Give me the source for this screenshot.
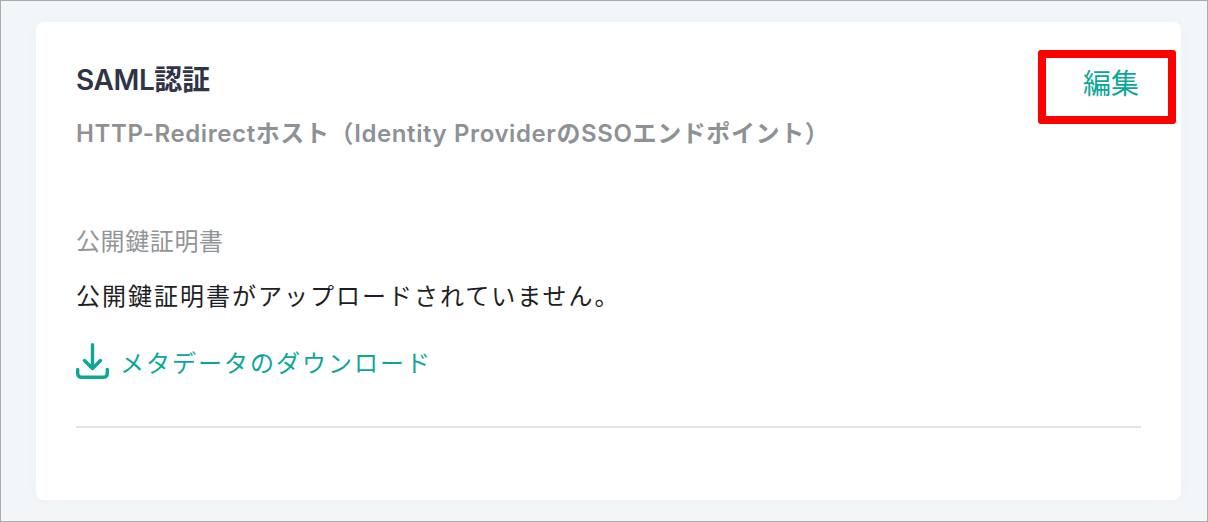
<div class="page">
  <section class="card">
    <header class="head">
      <div class="heads">
        <h2>SAML認証</h2>
        <p class="sub">HTTP-Redirectホスト（Identity ProviderのSSOエンドポイント）</p>
      </div>
      <a class="edit" href="#edit">編集</a>
    </header>
    <h3>公開鍵証明書</h3>
    <p class="msg">公開鍵証明書がアップロードされていません。</p>
    <a class="dl" href="#dl">
      <svg width="33" height="36" viewBox="0 0 33 36" fill="none" stroke="currentColor" stroke-width="3.4" stroke-linecap="round" stroke-linejoin="round" aria-hidden="true">
        <path d="M16.5 1.7V25M8.5 17.5L16.5 25.5L24.5 17.5" />
        <path d="M1.7 26.5V30Q1.7 34.3 6 34.3H27Q31.3 34.3 31.3 30V26.5" />
      </svg>
      <span>メタデータのダウンロード</span>
    </a>
    <hr />
  </section>
</div>

<style>
  :global(body) {
    margin: 0;
    background: #f3f6f9;
  }
  .page {
    box-sizing: border-box;
    width: 1208px;
    height: 522px;
    padding: 21px 26px 21px 35px;
    border: 1px solid #a9abad;
    font-family: Inter, "Noto Sans CJK JP", sans-serif;
  }
  .card {
    box-sizing: border-box;
    height: 478px;
    padding: 40px 40px 0;
    background: #fff;
    border-radius: 8px;
    box-shadow: 0 0 12px rgba(40, 60, 90, 0.03);
  }
  .head {
    display: flex;
    justify-content: space-between;
    align-items: flex-start;
  }
  h2 {
    margin: 0;
    font-size: 28px;
    line-height: 36px;
    font-weight: 600;
    letter-spacing: -0.4px;
    color: #2f3446;
  }
  .sub {
    margin: 20px 0 0;
    font-size: 24px;
    line-height: 32px;
    font-weight: 600;
    letter-spacing: 0.6px;
    color: #8e9295;
  }
  .edit {
    box-sizing: border-box;
    margin: -12px -35px 0 0;
    width: 138px;
    height: 74px;
    border: 8px solid #ff0000;
    border-radius: 3px;
    padding-left: 37px;
    font-size: 28px;
    line-height: 52px;
    color: #0ba799;
    text-decoration: none;
  }
  h3 {
    margin: 76px 0 0;
    font-size: 24px;
    line-height: 32px;
    font-weight: 400;
    letter-spacing: 0.6px;
    color: #929598;
  }
  .msg {
    margin: 22px 0 0;
    font-size: 24px;
    line-height: 34px;
    letter-spacing: 2px;
    color: #1d1f24;
  }
  .dl {
    display: flex;
    align-items: center;
    gap: 11px;
    margin-top: 27px;
    height: 40px;
    color: #0ba799;
    text-decoration: none;
    font-size: 24px;
    letter-spacing: 2px;
  }
  hr {
    margin: 45px 0 0;
    border: 0;
    height: 2px;
    background: #e3e4e5;
  }
</style>
